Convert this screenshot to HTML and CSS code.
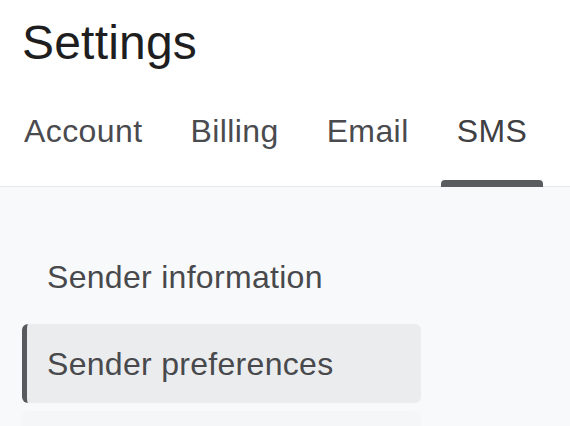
FILE: index.html
```html
<!DOCTYPE html>
<html lang="en">
<head>
<meta charset="utf-8">
<title>Settings</title>
<link rel="stylesheet" href="styles.css">
</head>
<body>
  <header class="header">
    <h1 class="title">Settings</h1>
    <nav class="tabs">
      <a class="tab">Account</a>
      <a class="tab">Billing</a>
      <a class="tab">Email</a>
      <a class="tab tab-active">SMS</a>
    </nav>
  </header>
  <main class="content">
    <ul class="side-nav">
      <li class="side-item">Sender information</li>
      <li class="side-item side-item-active">Sender preferences</li>
      <li class="side-item side-item-faint" aria-hidden="true"></li>
    </ul>
  </main>
</body>
</html>
```

FILE: styles.css
```css
* {
  box-sizing: border-box;
}

html, body {
  margin: 0;
  padding: 0;
  height: 100%;
}

body {
  font-family: "Liberation Sans", Arial, Helvetica, sans-serif;
  background: #f8f9fa;
  color: #48494c;
  overflow: hidden;
}

.header {
  background: #ffffff;
  padding-top: 15px;
  border-bottom: 1px solid #e7e8ea;
}

.title {
  margin: 0;
  padding-left: 22px;
  font-size: 48px;
  line-height: 56px;
  font-weight: 400;
  letter-spacing: 0.2px;
  color: #1e1e20;
}

.tabs {
  display: flex;
  gap: 16px;
  padding-left: 8px;
  margin-top: 40px;
}

.tab {
  position: relative;
  padding: 0 16px 35px;
  font-size: 32px;
  line-height: 40px;
  letter-spacing: 0.4px;
  color: #4a4b4e;
  text-decoration: none;
}

.tab-active {
  color: #3f4043;
}

.tab-active::after {
  content: "";
  position: absolute;
  left: 0;
  right: 0;
  bottom: -1px;
  height: 7px;
  background: #5a5b5e;
  border-radius: 4px 4px 0 0;
}

.content {
  padding: 50px 0 0 22px;
}

.side-nav {
  list-style: none;
  margin: 0;
  padding: 0;
  width: 399px;
  display: flex;
  flex-direction: column;
  gap: 8px;
}

.side-item {
  min-height: 79px;
  padding: 21px 20px 19px 25px;
  font-size: 32px;
  line-height: 39px;
  letter-spacing: 0.3px;
  color: #48494c;
  border-radius: 6px;
}

.side-item-active {
  background: #ebecee;
  border-left: 5px solid #58595c;
  padding-left: 20px;
}

.side-item-faint {
  background: #f5f6f8;
}
```
